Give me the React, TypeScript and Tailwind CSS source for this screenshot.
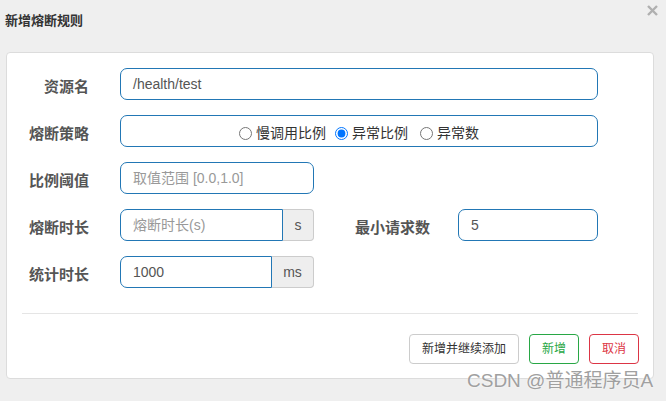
import React from "react";

const FONT = { fontFamily: '"Liberation Sans", "Noto Sans CJK SC", Arial, sans-serif' };

function Label({ children, w }: { children: React.ReactNode; w: string }) {
  return (
    <div className={`${w} shrink-0 text-right pt-[8px] leading-[21px] text-[15px] font-bold text-[#555]`}>
      {children}
    </div>
  );
}

export default function App() {
  return (
    <div className="relative w-[666px] h-[401px] bg-[#efefef] overflow-hidden flex flex-col" style={FONT}>
      <div className="relative h-[52px] shrink-0">
        <div className="pl-[5px] pt-[11px] text-[13px] leading-[20px] font-bold text-[#333]">新增熔断规则</div>
        <svg className="absolute left-[647px] top-[5px]" width="11" height="11" viewBox="0 0 11 11">
          <path d="M1 1 L10 10 M10 1 L1 10" stroke="#b0b0b0" strokeWidth="2.4" strokeLinecap="butt" />
        </svg>
      </div>

      <div className="ml-[6px] w-[648px] bg-white border border-[#dcdcdc] rounded-[4px] pt-[15px] pb-[14px]">
        <div className="flex flex-col gap-[15px]">
          <div className="flex">
            <Label w="w-[82px]">资源名</Label>
            <div className="ml-[31px] w-[478px] h-[32px] border border-[#2277b5] rounded-[7px] px-[12px] flex items-center text-[14px] text-[#555]">
              /health/test
            </div>
          </div>

          <div className="flex">
            <Label w="w-[82px]">熔断策略</Label>
            <div className="ml-[31px] w-[478px] h-[32px] border border-[#2277b5] rounded-[7px] flex items-center justify-center pt-[4px] text-[14px] text-[#333]">
              <label className="flex items-center">
                <input type="radio" name="g" className="m-0 mr-[4px] w-[13px] h-[13px]" />
                慢调用比例
              </label>
              <label className="flex items-center ml-[9px]">
                <input type="radio" name="g" defaultChecked className="m-0 mr-[4px] w-[13px] h-[13px]" />
                异常比例
              </label>
              <label className="flex items-center ml-[12px]">
                <input type="radio" name="g" className="m-0 mr-[4px] w-[13px] h-[13px]" />
                异常数
              </label>
            </div>
          </div>

          <div className="flex">
            <Label w="w-[82px]">比例阈值</Label>
            <div className="ml-[31px] w-[194px] h-[32px] border border-[#2277b5] rounded-[7px] px-[12px] flex items-center text-[14px] text-[#999]">
              取值范围 [0.0,1.0]
            </div>
          </div>

          <div className="flex">
            <Label w="w-[82px]">熔断时长</Label>
            <div className="ml-[31px] flex w-[194px] h-[32px]">
              <div className="w-[163px] border border-[#2277b5] rounded-l-[7px] px-[12px] flex items-center text-[14px] text-[#999]">
                熔断时长(s)
              </div>
              <div className="flex-1 border border-l-0 border-[#ccc] bg-[#eee] rounded-r-[4px] flex items-center justify-center text-[14px] text-[#555]">
                s
              </div>
            </div>
            <Label w="w-[116px]">最小请求数</Label>
            <div className="ml-[28px] w-[140px] h-[32px] border border-[#2277b5] rounded-[7px] px-[12px] flex items-center text-[14px] text-[#555]">
              5
            </div>
          </div>

          <div className="flex">
            <Label w="w-[82px]">统计时长</Label>
            <div className="ml-[31px] flex w-[194px] h-[32px]">
              <div className="w-[152px] border border-[#2277b5] rounded-l-[7px] px-[12px] flex items-center text-[14px] text-[#555]">
                1000
              </div>
              <div className="flex-1 border border-l-0 border-[#ccc] bg-[#eee] rounded-r-[4px] flex items-center justify-center text-[14px] text-[#555]">
                ms
              </div>
            </div>
          </div>
        </div>

        <div className="mx-[15px] mt-[25px] h-px bg-[#e5e5e5]" />

        <div className="mt-[20px] pr-[14px] flex justify-end gap-[10px]">
          <button className="h-[30px] px-[12px] border border-[#ccc] rounded-[4px] bg-white text-[12px] text-[#333]">
            新增并继续添加
          </button>
          <button className="h-[30px] px-[12px] border border-[#28a745] rounded-[4px] bg-white text-[12px] text-[#28a745]">
            新增
          </button>
          <button className="h-[30px] px-[12px] border border-[#dc3545] rounded-[4px] bg-white text-[12px] text-[#dc3545]">
            取消
          </button>
        </div>
      </div>

      <div className="absolute left-[467px] top-[370px] text-[19px] leading-[22px] text-[#a0a0a0]" style={{ textShadow: "0 0 2px #fff" }}>
        CSDN @普通程序员A
      </div>
    </div>
  );
}
